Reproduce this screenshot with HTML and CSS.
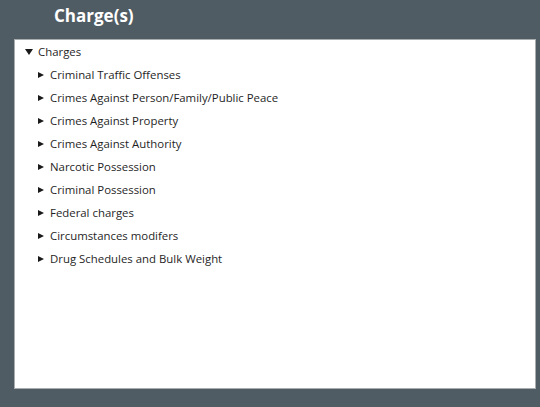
FILE: index.html
```html
<!DOCTYPE html>
<html>
<head>
<meta charset="utf-8">
<link rel="stylesheet" href="styles.css">
</head>
<body>
<div class="page">
  <h1 class="title">Charge(s)</h1>
  <div class="panel">
    <ul class="tree">
      <li class="node open">
        <div class="row"><span class="caret down"></span><span class="label">Charges</span></div>
        <ul class="children">
          <li class="row"><span class="caret right"></span><span class="label">Criminal Traffic Offenses</span></li>
          <li class="row"><span class="caret right"></span><span class="label">Crimes Against Person/Family/Public Peace</span></li>
          <li class="row"><span class="caret right"></span><span class="label">Crimes Against Property</span></li>
          <li class="row"><span class="caret right"></span><span class="label">Crimes Against Authority</span></li>
          <li class="row"><span class="caret right"></span><span class="label">Narcotic Possession</span></li>
          <li class="row"><span class="caret right"></span><span class="label">Criminal Possession</span></li>
          <li class="row"><span class="caret right"></span><span class="label">Federal charges</span></li>
          <li class="row"><span class="caret right"></span><span class="label">Circumstances modifers</span></li>
          <li class="row"><span class="caret right"></span><span class="label">Drug Schedules and Bulk Weight</span></li>
        </ul>
      </li>
    </ul>
  </div>
</div>
</body>
</html>
```
FILE: styles.css
```css
html, body {
  margin: 0;
  padding: 0;
  background: #505c63;
  width: 540px;
  height: 407px;
  overflow: hidden;
}
.page {
  display: flex;
  flex-direction: column;
  font-family: "Open Sans", "Noto Sans", sans-serif;
}
.title {
  margin: 0;
  height: 39px;
  padding-left: 54px;
  box-sizing: border-box;
  font-size: 17px;
  font-weight: 700;
  line-height: 32px;
  color: #ffffff;
}
.panel {
  margin-left: 14px;
  width: 522px;
  height: 350px;
  box-sizing: border-box;
  background: #ffffff;
  border: 1px solid #a9adb0;
}
.tree, .children {
  list-style: none;
  margin: 0;
  padding: 0;
}
.children {
  padding-left: 13px;
}
.row {
  display: flex;
  align-items: center;
  height: 23px;
  padding-left: 10px;
  font-size: 11.4px;
  color: #1f1f1f;
}
.caret {
  display: inline-block;
  width: 0;
  height: 0;
  flex: none;
}
.caret.down {
  border-left: 4px solid transparent;
  border-right: 4px solid transparent;
  border-top: 6px solid #1a1a1a;
  margin-right: 5px;
}
.caret.right {
  border-top: 3.5px solid transparent;
  border-bottom: 3.5px solid transparent;
  border-left: 6px solid #1a1a1a;
  margin-right: 6px;
}
.label {
  white-space: nowrap;
}
```
